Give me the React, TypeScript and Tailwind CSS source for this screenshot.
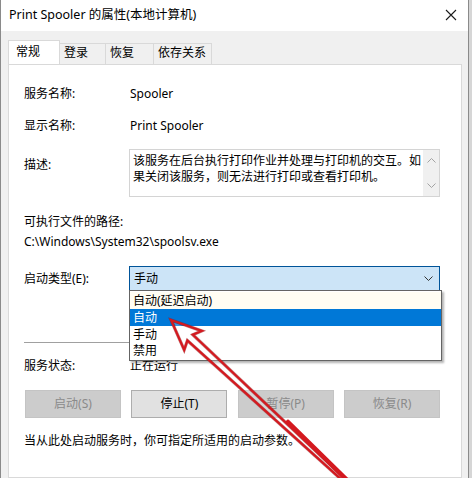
import React from 'react';

const FONT = "font-['Noto_Sans','Noto_Sans_CJK_SC',sans-serif]";

const Chevron = ({ up = false, className = '' }: { up?: boolean; className?: string }) => (
  <svg width="9" height="5" viewBox="0 0 9 5" className={className}>
    <path d={up ? 'M0.5 4.5 L4.5 0.5 L8.5 4.5' : 'M0.5 0.5 L4.5 4.5 L8.5 0.5'} fill="none" stroke="currentColor" strokeWidth="1" />
  </svg>
);

const Tab = ({ label, active, w }: { label: string; active?: boolean; w: string }) => (
  <div
    className={
      active
        ? `${w} h-[24px] bg-white border border-b-0 border-[#d9d9d9] pl-[7px] pt-[3px] text-black relative z-10 -mb-px`
        : `${w} h-[21px] mt-[3px] bg-[#f0f0f0] border border-b-0 border-l-0 border-[#d9d9d9] pl-[4px] pt-[1px] text-black`
    }
  >
    {label}
  </div>
);

const Button = ({ label, disabled }: { label: string; disabled?: boolean }) => (
  <div
    className={
      disabled
        ? 'w-[96px] h-[28px] flex items-center justify-center bg-[#cccccc] border border-[#c4c4c4] text-[#8a8a8a]'
        : 'w-[96px] h-[28px] flex items-center justify-center bg-[#e1e1e1] border border-[#adadad] text-black'
    }
  >
    {label}
  </div>
);

const ARROW_PTS = '171,320 201.8,330.9 192.8,334.7 348.3,481.8 346.3,484 187.4,340.5 184.2,349.9';

// red outlined arrow pointing at the highlighted option
const Arrow = () => (
  <svg className="absolute inset-0 pointer-events-none z-30" width="472" height="478" viewBox="0 0 472 478">
    <polygon points={ARROW_PTS} fill="rgba(255,255,255,0.45)" stroke="#8f1014" strokeWidth="3.2" opacity="0.5" />
    <polygon points={ARROW_PTS} fill="none" stroke="#d4191f" strokeWidth="2.2" />
    {/* lower part of the shaft reads as a solid stroke */}
    <line x1="288" y1="422" x2="349" y2="482" stroke="#d4191f" strokeWidth="4.5" strokeLinecap="round" />
  </svg>
);

export default function App() {
  return (
    <div className={`relative w-[472px] h-[478px] overflow-hidden bg-[#d6d6d6] text-[12px] leading-[16px] text-black ${FONT}`}>
      <div className="w-[469px] h-[478px] border-l border-r border-[#8a8a8a] bg-[#f0f0f0] flex flex-col">
        {/* title bar */}
        <div className="h-[31px] bg-white flex items-center justify-between pl-[8px] pr-[8px] shrink-0">
          <span className="text-[12.5px] pb-[1px]">Print Spooler 的属性(本地计算机)</span>
          <svg width="12" height="12" viewBox="0 0 12 12" className="mr-[3px] mb-[1px]">
            <path d="M1 1 L11 11 M11 1 L1 11" stroke="#1a1a1a" strokeWidth="1.1" />
          </svg>
        </div>

        {/* tabs */}
        <div className="flex pl-[7px] pt-[9px] shrink-0">
          <Tab label="常规" active w="w-[52px]" />
          <Tab label="登录" w="w-[46px]" />
          <Tab label="恢复" w="w-[48px]" />
          <Tab label="依存关系" w="w-[58px]" />
        </div>

        {/* page */}
        <div className="ml-[7px] w-[454px] flex-1 bg-white border border-[#d9d9d9] pl-[15px] pr-[21px] pt-[21px]">
          <div className="flex">
            <div className="w-[105px]">服务名称:</div>
            <div className="pl-[1px]">Spooler</div>
          </div>

          <div className="flex mt-[16px]">
            <div className="w-[105px]">显示名称:</div>
            <div className="pl-[1px]">Print Spooler</div>
          </div>

          <div className="flex mt-[15px]">
            <div className="w-[105px] pt-[8px]">描述:</div>
            <div className="flex-1 h-[48px] border border-[#d4d4d4] flex">
              <div className="flex-1 pl-[3px] pt-[3px] leading-[16px]">
                该服务在后台执行打印作业并处理与打印机的交互。如果关闭该服务，则无法进行打印或查看打印机。
              </div>
              <div className="w-[16px] bg-[#f0f0f0] flex flex-col justify-between items-center text-[#a3a3a3] py-[8px]">
                <Chevron up />
                <Chevron />
              </div>
            </div>
          </div>

          <div className="mt-[17px]">可执行文件的路径:</div>
          <div className="mt-[4px]">C:\Windows\System32\spoolsv.exe</div>

          <div className="flex items-center mt-[16px]">
            <div className="w-[105px]">启动类型(E):</div>
            <div className="relative flex-1">
              <div className="h-[25px] bg-[#cce4f7] border border-[#005499] flex items-center justify-between pl-[4px] pr-[6px]">
                <span>手动</span>
                <Chevron className="text-[#333]" />
              </div>
              {/* open drop-down list */}
              <div className="absolute left-0 top-[24px] w-[313px] bg-white border border-[#646464] shadow-[2px_2px_2px_rgba(0,0,0,0.3)] z-20 py-[1px]">
                <div className="h-[17px] pl-[3px] flex items-center bg-[#fffdf3]">自动(延迟启动)</div>
                <div className="h-[17px] pl-[3px] flex items-center bg-[#0078d7] text-white">自动</div>
                <div className="h-[17px] pl-[3px] flex items-center">手动</div>
                <div className="h-[16px] pl-[3px] flex items-center">禁用</div>
              </div>
            </div>
          </div>

          <div className="mt-[51px] h-px bg-[#a0a0a0]" />

          <div className="flex mt-[15px]">
            <div className="w-[105px]">服务状态:</div>
            <div className="pl-[1px]">正在运行</div>
          </div>

          <div className="flex justify-between mt-[16px] pl-[1px]">
            <Button label="启动(S)" disabled />
            <Button label="停止(T)" />
            <Button label="暂停(P)" disabled />
            <Button label="恢复(R)" disabled />
          </div>

          <div className="mt-[15px]">当从此处启动服务时，你可指定所适用的启动参数。</div>
        </div>
      </div>
      <Arrow />
    </div>
  );
}
